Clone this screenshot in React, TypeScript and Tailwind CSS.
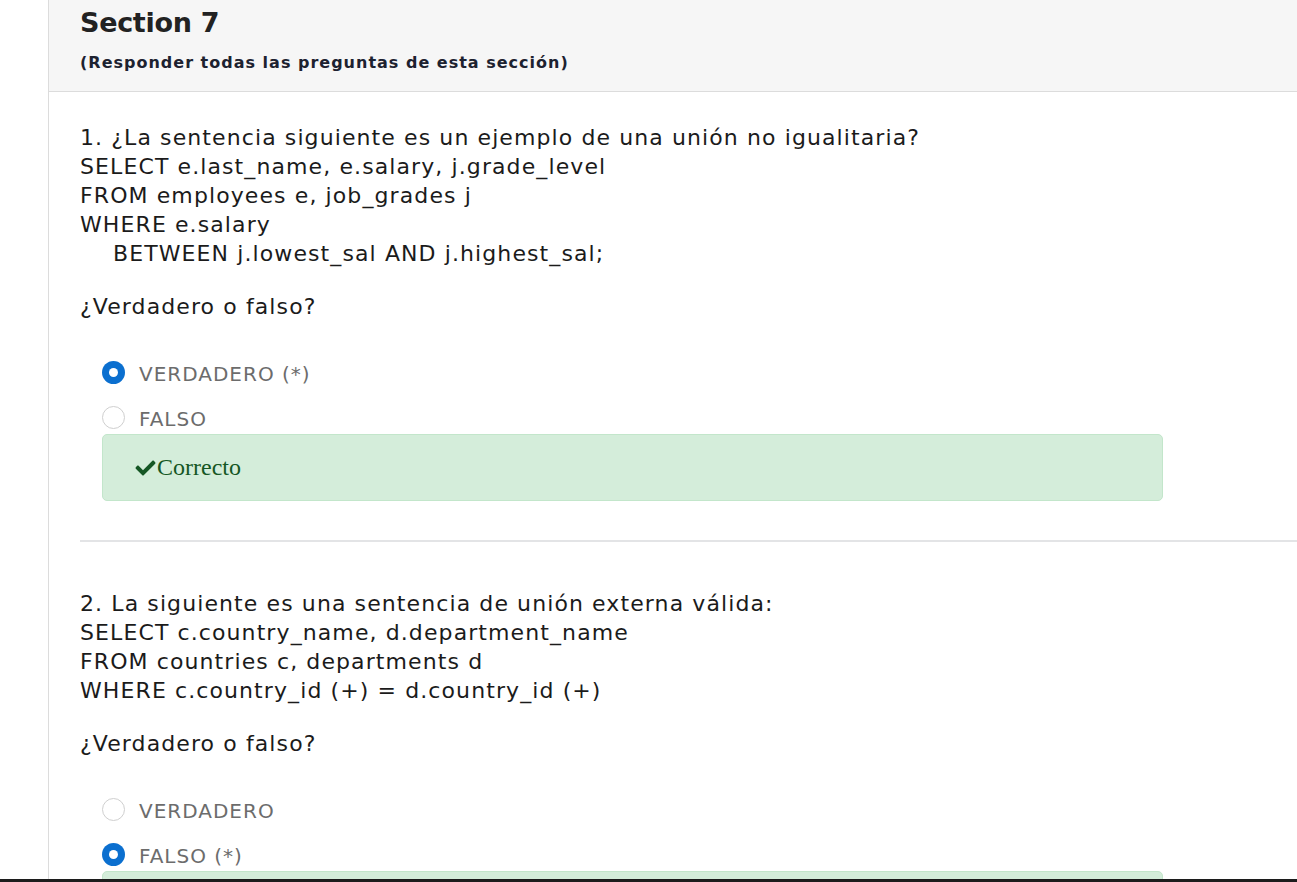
import React from "react";

const font = { fontFamily: '"DejaVu Sans", Verdana, sans-serif' };

function Check() {
  return (
    <svg viewBox="0 0 512 512" className="h-[20px] w-[23px] fill-[#155724]">
      <path d="M173.898 439.404l-166.4-166.4c-9.997-9.997-9.997-26.206 0-36.204l36.203-36.204c9.997-9.998 26.207-9.998 36.204 0L192 312.69 432.095 72.596c9.997-9.997 26.207-9.997 36.204 0l36.203 36.204c9.997 9.997 9.997 26.206 0 36.204l-294.4 294.401c-9.998 9.997-26.207 9.997-36.204-.001z" />
    </svg>
  );
}

function Radio({ checked }: { checked: boolean }) {
  return checked ? (
    <span className="flex h-[23px] w-[23px] items-center justify-center rounded-full bg-[#0b6fcf]">
      <span className="h-[9px] w-[9px] rounded-full bg-white" />
    </span>
  ) : (
    <span className="h-[23px] w-[23px] rounded-full border border-[#cfcfcf] bg-white" />
  );
}

function Option({ label, checked }: { label: string; checked: boolean }) {
  return (
    <div className="flex h-[45px] items-center gap-[14px]">
      <Radio checked={checked} />
      <span className="mt-[3px] text-[20px] tracking-[1px] text-[#6c6c6c]">{label}</span>
    </div>
  );
}

function Question({
  lines,
  indented,
  options,
}: {
  lines: string[];
  indented?: string;
  options: { label: string; checked: boolean }[];
}) {
  return (
    <div className="text-[22px] leading-[29px] tracking-[1.1px] text-[#1b1b1b]">
      {lines.map((l, i) => (
        <div key={i} className="whitespace-pre">
          {l}
        </div>
      ))}
      {indented && <div className="pl-[33px]">{indented}</div>}
      <div className="mt-[24px]">¿Verdadero o falso?</div>
      <div className="mt-[29px] pl-[22px] tracking-normal">
        {options.map((o) => (
          <Option key={o.label} {...o} />
        ))}
        <div className="mt-[-6px] flex h-[67px] w-[1061px] items-center rounded-[5px] border border-[#c3e6cb] bg-[#d4edda] pl-[31px]">
          <Check />
          <span
            className="text-[24px] text-[#155724]"
            style={{ fontFamily: '"Liberation Serif", "Times New Roman", serif' }}
          >
            Correcto
          </span>
        </div>
      </div>
    </div>
  );
}

export default function App() {
  return (
    <div className="flex h-[882px] flex-col overflow-hidden bg-white" style={font}>
      <div className="ml-[48px] min-h-0 flex-1 overflow-hidden border-l border-[#dcdcdc]">
        <div className="h-[92px] border-b border-[#dcdcdc] bg-[#f6f6f6] pl-[31px] pt-[6px]">
          <h1 className="text-[27px] font-bold leading-[34px] tracking-[-0.3px] text-[#222]">
            Section 7
          </h1>
          <p className="mt-[11px] text-[16px] font-bold tracking-[1px] text-[#1d2230]">
            (Responder todas las preguntas de esta sección)
          </p>
        </div>
        <div className="pl-[31px] pt-[31px]">
          <Question
            lines={[
              "1. ¿La sentencia siguiente es un ejemplo de una unión no igualitaria?",
              "SELECT e.last_name, e.salary, j.grade_level",
              "FROM employees e, job_grades j",
              "WHERE e.salary",
            ]}
            indented="BETWEEN j.lowest_sal AND j.highest_sal;"
            options={[
              { label: "VERDADERO (*)", checked: true },
              { label: "FALSO", checked: false },
            ]}
          />
          <div className="mt-[39px] h-[2px] bg-[#e3e4e6]" />
          <div className="pt-[47px]">
            <Question
              lines={[
                "2. La siguiente es una sentencia de unión externa válida:",
                "SELECT c.country_name, d.department_name",
                "FROM countries c, departments d",
                "WHERE c.country_id (+) = d.country_id (+)",
              ]}
              options={[
                { label: "VERDADERO", checked: false },
                { label: "FALSO (*)", checked: true },
              ]}
            />
          </div>
        </div>
      </div>
      <div className="h-[3px] bg-[#1c1c1c]" />
    </div>
  );
}
